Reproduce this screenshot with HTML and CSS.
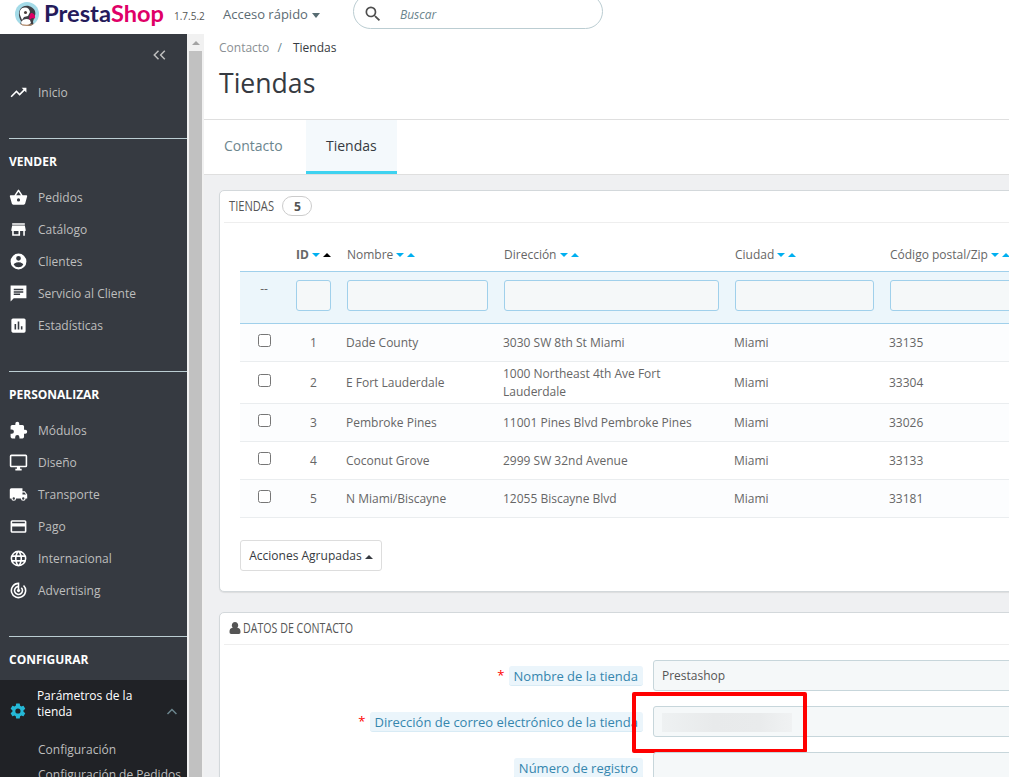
FILE: index.html
```html
<!DOCTYPE html>
<html lang="es">
<head>
    <meta charset="UTF-8">
    <meta name="viewport" content="width=device-width, initial-scale=1.0">
    <title>Tiendas • PrestaShop</title>
    <link rel="stylesheet" href="styles.css">
</head>
<body>
    <header class="header">
        <svg class="logo" width="150" height="34" viewBox="0 0 150 34">
            <clipPath id="badge"><circle cx="12" cy="14" r="12"/></clipPath>
            <g clip-path="url(#badge)">
                <rect width="24" height="28" fill="#a4dbe8"/>
                <path d="M5 26l1-5C4 18 3 13 5 9.500c2-4 8-5 12-2 3 2 4 5 3 8l-2 6 1 6z" fill="#3f3f45"/>
                <path d="M5 15c-1-4 1-7.500 5-7.500 3 0 4.500 2 5 4.500l-2 4-4 1-2 3z" fill="#fff"/>
                <path d="M6 22c2-3 6-4 9-2l1 3-4 3H7z" fill="#fff"/>
                <path d="M16 13c3 0 4.500 2.500 4 5.500L17 18l-2.500 2c-.5-3 0-5 1.500-7z" fill="#df0067"/>
                <circle cx="10.500" cy="12.500" r="1.500" fill="#4a3f3b"/>
                <path d="M4 23.500c4 1.500 11 1.500 16 0V28H4z" fill="#b58a68"/>
            </g>
            <text class="logo-presta" x="29" y="22" textLength="67" lengthAdjust="spacingAndGlyphs">Presta</text>
            <text class="logo-shop" x="96" y="22" textLength="53" lengthAdjust="spacingAndGlyphs">Shop</text>
        </svg>
        <span class="version">1.7.5.2</span>
        <span class="quick">Acceso rápido <i class="caret-down"></i></span>
        <div class="search">
            <svg width="20" height="20" viewBox="0 0 24 24"><path d="M15.500 14h-.79l-.28-.27A6.470 6.470 0 0 0 16 9.500 6.500 6.500 0 1 0 9.500 16c1.610 0 3.090-.59 4.230-1.570l.27.28v.79l5 4.990L20.490 19l-4.990-5zm-6 0C7.010 14 5 11.990 5 9.500S7.010 5 9.500 5 14 7.010 14 9.500 11.990 14 9.500 14z"/></svg>
            <span>Buscar</span>
        </div>
    </header>

    <div class="page">
        <nav class="sidebar">
            <div class="collapse">
                <svg width="14" height="10" viewBox="0 0 14 10"><path d="M6.500.8 2.300 5l4.200 4.200M12.800.8 8.600 5l4.200 4.200"/></svg>
            </div>
            <ul class="menu">
                <li><svg viewBox="0 0 24 24"><path d="M16 6l2.290 2.290-4.880 4.880-4-4L2 16.590 3.410 18l6-6 4 4 6.300-6.290L22 12V6z"/></svg>Inicio</li>
            </ul>

            <!-- Vender -->
            <h2 class="menu-title">VENDER</h2>
            <ul class="menu">
                <li><svg viewBox="0 0 24 24"><path d="M17.210 9l-4.380-6.560a1 1 0 0 0-1.660.010L6.790 9H2c-.55 0-1 .45-1 1 0 .09.010.18.040.27l2.540 9.270c.23.84 1 1.460 1.920 1.460h13c.92 0 1.690-.62 1.930-1.460l2.540-9.270L23 10c0-.55-.45-1-1-1zM9 9l3-4.400L15 9zm3 8a2 2 0 1 1 0-4 2 2 0 0 1 0 4z"/></svg>Pedidos</li>
                <li><svg viewBox="0 0 24 24"><path d="M20 4H4v2h16zm1 10v-2l-1-5H4l-1 5v2h1v6h10v-6h4v6h2v-6zm-9 4H6v-4h6z"/></svg>Catálogo</li>
                <li><svg viewBox="0 0 24 24"><path d="M12 2a10 10 0 1 0 0 20 10 10 0 0 0 0-20zm0 3a3 3 0 1 1 0 6 3 3 0 0 1 0-6zm0 14.200a7.200 7.200 0 0 1-6-3.220c.03-1.990 4-3.080 6-3.080s5.970 1.090 6 3.080a7.200 7.200 0 0 1-6 3.220z"/></svg>Clientes</li>
                <li><svg viewBox="0 0 24 24"><path d="M22 2H2v20l4-4h16zM6 9h12v2H6zm8 5H6v-2h8zm4-6H6V6h12z"/></svg>Servicio al Cliente</li>
                <li><svg viewBox="0 0 24 24"><path d="M19 3H5a2 2 0 0 0-2 2v14c0 1.100.9 2 2 2h14a2 2 0 0 0 2-2V5a2 2 0 0 0-2-2zM9 17H7v-7h2zm4 0h-2V7h2zm4 0h-2v-4h2z"/></svg>Estadísticas</li>
            </ul>

            <!-- Personalizar -->
            <h2 class="menu-title">PERSONALIZAR</h2>
            <ul class="menu">
                <li><svg viewBox="0 0 24 24"><path d="M20.500 11H19V7a2 2 0 0 0-2-2h-4V3.500a2.500 2.500 0 0 0-5 0V5H4a2 2 0 0 0-2 2v3.800h1.500a2.700 2.700 0 0 1 0 5.400H2V20c0 1.100.9 2 2 2h3.800v-1.500a2.700 2.700 0 0 1 5.400 0V22H17a2 2 0 0 0 2-2v-4h1.500a2.500 2.500 0 0 0 0-5z"/></svg>Módulos</li>
                <li><svg viewBox="0 0 24 24"><path d="M21 2H3a2 2 0 0 0-2 2v12c0 1.100.9 2 2 2h7v2H8v2h8v-2h-2v-2h7a2 2 0 0 0 2-2V4a2 2 0 0 0-2-2zm0 14H3V4h18z"/></svg>Diseño</li>
                <li><svg viewBox="0 0 24 24"><path d="M20 8h-3V4H3a2 2 0 0 0-2 2v11h2a3 3 0 0 0 6 0h6a3 3 0 0 0 6 0h2v-5zM6 18.500a1.500 1.500 0 1 1 0-3 1.500 1.500 0 0 1 0 3zm13.500-9l1.960 2.500H17V9.500zm-1.500 9a1.500 1.500 0 1 1 0-3 1.500 1.500 0 0 1 0 3z"/></svg>Transporte</li>
                <li><svg viewBox="0 0 24 24"><path d="M20 4H4a2 2 0 0 0-2 2v12c0 1.110.89 2 2 2h16a2 2 0 0 0 2-2V6a2 2 0 0 0-2-2zm0 14H4v-6h16zm0-10H4V6h16z"/></svg>Pago</li>
                <li><svg viewBox="0 0 24 24"><path d="M12 2a10 10 0 1 0 0 20 10 10 0 0 0 0-20zm6.930 6h-2.950a15.650 15.650 0 0 0-1.380-3.560A8.030 8.030 0 0 1 18.930 8zM12 4.040c.83 1.200 1.480 2.530 1.910 3.960h-3.820c.43-1.430 1.080-2.760 1.910-3.960zM4.260 14a8.200 8.200 0 0 1 0-4h3.380a16.500 16.500 0 0 0 0 4zm.82 2h2.950c.32 1.250.78 2.450 1.380 3.560A7.990 7.990 0 0 1 5.080 16zm2.950-8H5.080a7.990 7.990 0 0 1 4.330-3.560A15.650 15.650 0 0 0 8.030 8zM12 19.960A14 14 0 0 1 10.090 16h3.820A14 14 0 0 1 12 19.960zM14.340 14H9.660a14.700 14.700 0 0 1 0-4h4.680a14.600 14.600 0 0 1 0 4zm.25 5.560c.6-1.110 1.060-2.310 1.380-3.560h2.950a8.030 8.030 0 0 1-4.330 3.560zM16.360 14a16.500 16.500 0 0 0 0-4h3.380a8.200 8.200 0 0 1 0 4z"/></svg>Internacional</li>
                <li><svg viewBox="0 0 24 24"><path d="M19.070 4.930l-1.410 1.410A8 8 0 1 1 11 4.070v2.020a6 6 0 1 0 5.240 1.670l-1.410 1.410A4 4 0 1 1 11 8.140v2.140a2 2 0 1 0 2 0V2h-1a10 10 0 1 0 7.070 2.930z"/></svg>Advertising</li>
            </ul>

            <!-- Configurar -->
            <h2 class="menu-title last">CONFIGURAR</h2>
            <div class="open-item">
                <div class="open-head">
                    <svg class="gear" viewBox="0 0 24 24"><path d="M19.430 12.980a7.800 7.800 0 0 0 0-1.960l2.110-1.650a.5.5 0 0 0 .12-.64l-2-3.460a.5.5 0 0 0-.61-.22l-2.490 1a7.300 7.300 0 0 0-1.690-.98l-.38-2.650A.49.49 0 0 0 14 2h-4a.49.49 0 0 0-.49.42l-.38 2.650c-.61.25-1.170.59-1.690.98l-2.490-1a.49.49 0 0 0-.61.22l-2 3.460a.49.49 0 0 0 .12.64l2.110 1.650a7.900 7.900 0 0 0 0 1.960l-2.110 1.650a.5.5 0 0 0-.12.64l2 3.460c.12.22.39.3.61.22l2.490-1c.52.4 1.080.73 1.690.98l.38 2.650c.03.24.24.42.49.42h4c.25 0 .46-.18.49-.42l.38-2.650a7.700 7.700 0 0 0 1.690-.98l2.490 1c.23.090.49 0 .61-.22l2-3.460a.5.5 0 0 0-.12-.64zM12 15.500a3.500 3.500 0 1 1 0-7 3.500 3.500 0 0 1 0 7z"/></svg>
                    <span>Parámetros de la tienda</span>
                    <svg class="chevron" width="12" height="7" viewBox="0 0 12 7"><path d="M1.500 6 6 1.500 10.500 6"/></svg>
                </div>
                <ul class="submenu">
                    <li>Configuración</li>
                    <li>Configuración de Pedidos</li>
                </ul>
            </div>
        </nav>
        <div class="scrollbar"><i class="scroll-up"></i><div class="scroll-thumb"></div></div>

        <main class="main">
            <div class="page-head">
                <div class="breadcrumb">Contacto <em>/</em> <b>Tiendas</b></div>
                <h1>Tiendas</h1>
            </div>
            <div class="tabs">
                <a class="tab">Contacto</a>
                <a class="tab active">Tiendas</a>
            </div>

            <section class="panel stores">
                <div class="panel-heading">
                    <svg width="48" height="22"><text x="0" y="15.500" textLength="45" lengthAdjust="spacingAndGlyphs">TIENDAS</text></svg>
                    <span class="badge"><svg width="10" height="18"><text x="0" y="13.500" textLength="7" lengthAdjust="spacingAndGlyphs">5</text></svg></span>
                </div>
                <table class="table">
                    <colgroup>
                        <col class="c-check"><col class="c-id"><col class="c-name"><col class="c-address"><col class="c-city"><col class="c-zip">
                    </colgroup>
                    <thead>
                        <tr class="titles">
                            <th></th>
                            <th class="sorted">ID <i class="down"></i><i class="up"></i></th>
                            <th>Nombre <i class="down"></i><i class="up"></i></th>
                            <th>Dirección <i class="down"></i><i class="up"></i></th>
                            <th>Ciudad <i class="down"></i><i class="up"></i></th>
                            <th>Código postal/Zip <i class="down"></i><i class="up"></i></th>
                        </tr>
                        <tr class="filters">
                            <th class="dashes">--</th>
                            <th><input type="text"></th>
                            <th><input type="text"></th>
                            <th><input type="text"></th>
                            <th><input type="text"></th>
                            <th><input type="text"></th>
                        </tr>
                    </thead>
                    <tbody>
                        <tr><td><input type="checkbox"></td><td>1</td><td>Dade County</td><td>3030 SW 8th St Miami</td><td>Miami</td><td>33135</td></tr>
                        <tr class="tall"><td><input type="checkbox"></td><td>2</td><td>E Fort Lauderdale</td><td>1000 Northeast 4th Ave Fort<br>Lauderdale</td><td>Miami</td><td>33304</td></tr>
                        <tr><td><input type="checkbox"></td><td>3</td><td>Pembroke Pines</td><td>11001 Pines Blvd Pembroke Pines</td><td>Miami</td><td>33026</td></tr>
                        <tr><td><input type="checkbox"></td><td>4</td><td>Coconut Grove</td><td>2999 SW 32nd Avenue</td><td>Miami</td><td>33133</td></tr>
                        <tr><td><input type="checkbox"></td><td>5</td><td>N Miami/Biscayne</td><td>12055 Biscayne Blvd</td><td>Miami</td><td>33181</td></tr>
                    </tbody>
                </table>
                <button class="bulk" type="button">Acciones Agrupadas <i class="up"></i></button>
            </section>

            <section class="panel contact">
                <div class="panel-heading">
                    <svg class="user" width="12" height="12" viewBox="0 0 12 12"><path d="M6 0a3.200 3.400 0 0 1 2.300 5.800C10.800 6.200 11.500 7.600 11.500 10c0 1.200-.6 2-1.700 2H2.200C1.100 12 .5 11.200.5 10c0-2.400.7-3.800 3.200-4.200A3.200 3.400 0 0 1 6 0z"/></svg>
                    <svg width="116" height="22"><text x="0" y="15.500" textLength="110" lengthAdjust="spacingAndGlyphs">DATOS DE CONTACTO</text></svg>
                </div>
                <div class="form-row">
                    <label><em>*</em><span>Nombre de la tienda</span></label>
                    <input type="text" value="Prestashop">
                </div>
                <div class="form-row">
                    <label><em>*</em><span>Dirección de correo electrónico de la tienda</span></label>
                    <div class="field"><div class="hidden-mail"></div></div>
                    <div class="highlight"></div>
                </div>
                <div class="form-row">
                    <label><span>Número de registro</span></label>
                    <input type="text">
                </div>
            </section>
        </main>
    </div>
</body>
</html>
```
FILE: styles.css
```css
* {
    box-sizing: border-box;
}
body {
    margin: 0;
    height: 777px;
    overflow: hidden;
    background-color: #eff0f2;
    font-family: "Open Sans", sans-serif;
    font-size: 12px;
    color: #555;
}
ul {
    list-style: none;
    margin: 0;
    padding: 0;
}
i {
    display: inline-block;
}

/* Top bar */
.header {
    display: flex;
    height: 34px;
    background: #fff;
}
.logo {
    margin-left: 15px;
}
.logo-presta, .logo-shop {
    font-family: "Lato", sans-serif;
    font-weight: 700;
    font-size: 22px;
    fill: #251b5b;
}
.logo-shop {
    fill: #df0067;
}
.version {
    width: 49px;
    padding: 9px 0 0 9px;
    font-size: 10px;
    line-height: 15px;
}
.quick {
    width: 139px;
    padding: 5px 0 0 9px;
    font-size: 13px;
    line-height: 18px;
    color: #5c6b73;
}
.caret-down {
    border: 4.500px solid transparent;
    border-top: 5px solid #576c72;
    border-bottom: 0;
    margin-left: 1px;
    vertical-align: 1px;
}
.search {
    display: flex;
    align-items: center;
    width: 250px;
    height: 35px;
    margin-top: -6px;
    padding: 5px 0 0 9px;
    border: 1px solid #bbcdd2;
    border-radius: 18px;
    gap: 17px;
    font-style: italic;
    color: #6c868e;
}
.search svg {
    fill: #4e4e4e;
}

/* Sidebar */
.page {
    display: flex;
    height: 743px;
}
.sidebar {
    flex: none;
    width: 187px;
    height: 743px;
    overflow: hidden;
    background: #363a41;
}
.collapse {
    height: 42px;
    padding: 13px 0 0 152px;
}
.collapse path, .chevron path {
    fill: none;
    stroke: #bebebe;
    stroke-width: 1.500;
}
.menu li {
    display: flex;
    align-items: center;
    height: 32px;
    padding-left: 9px;
    gap: 10px;
    color: #bebebe;
}
.menu svg {
    width: 19px;
    height: 19px;
    fill: #fff;
}
.menu-title {
    height: 43px;
    margin: 30px 0 0 9px;
    border-top: 1px solid #bbcdd2;
    font-size: 12px;
    font-weight: 700;
    line-height: 45px;
    color: #fff;
}
.menu-title.last {
    height: 44px;
}
.open-item {
    height: 120px;
    background: #202226;
}
.open-head {
    display: flex;
    align-items: flex-end;
    height: 40px;
    padding: 0 9px;
    line-height: 16px;
    color: #fff;
}
.open-head span {
    width: 120px;
    margin-left: 10px;
}
.gear {
    width: 18px;
    height: 18px;
    fill: #25b9d7;
}
.chevron {
    margin: 0 0 5px 10px;
}
.chevron path {
    stroke: #6c868e;
}
.submenu {
    padding: 17px 0 0 38px;
    line-height: 25px;
    white-space: nowrap;
    color: #bebebe;
}
.scrollbar {
    flex: none;
    width: 17px;
    padding: 7px 2px 0;
    background: #f1f1f1;
}
.scroll-up {
    display: block;
    width: 8px;
    margin: 0 0 6px 3px;
    border: 4px solid transparent;
    border-top: 0;
    border-bottom: 4px solid #a3a3a3;
}
.scroll-thumb {
    width: 13px;
    height: 726px;
    background: #c1c1c1;
}

/* Page heading and tabs */
.main {
    flex: 1;
    min-width: 0;
    overflow: hidden;
}
.page-head {
    height: 86px;
    padding: 5px 0 0 15px;
    border-bottom: 1px solid #dfdfdf;
    background: #fff;
}
.breadcrumb {
    line-height: 18px;
    color: #8a8f93;
}
.breadcrumb em {
    margin: 0 5px;
    font-style: normal;
    color: #6c868e;
}
.breadcrumb b {
    margin-left: 3px;
    font-weight: 400;
    color: #363a41;
}
h1 {
    margin: 9px 0 0;
    font-size: 26.600px;
    font-weight: 400;
    line-height: 35px;
    color: #363a41;
}
.tabs {
    display: flex;
    height: 55px;
    background: #fff;
    border-bottom: 1px solid #dfdfdf;
}
.tab {
    width: 102px;
    padding-left: 20px;
    font-size: 14px;
    line-height: 52px;
    color: #6c868e;
}
.tab.active {
    width: 91px;
    background: #f4f9fc;
    border-bottom: 3px solid #3ed2f0;
    color: #363a41;
}

/* Panels */
.panel {
    width: 1100px;
    margin: 15px 0 0 15px;
    padding: 0 4px;
    border: 1px solid #d3d8db;
    border-radius: 5px;
    background: #fff;
    box-shadow: 0 1px 1px rgba(0, 0, 0, .08);
}
.stores {
    height: 402px;
}
.contact {
    height: 300px;
    margin-top: 20px;
}
.panel-heading {
    display: flex;
    align-items: center;
    height: 32px;
    padding: 0 0 1px 5px;
    border-bottom: 1px solid #eee;
}
.panel-heading svg {
    overflow: visible;
}
.panel-heading text {
    font-size: 14px;
    fill: #555;
}
.badge {
    width: 30px;
    height: 20px;
    margin-left: 5px;
    padding-left: 11px;
    border: 1px solid #ccc;
    border-radius: 10px;
}
.badge text {
    font-weight: 700;
    font-size: 13px;
}
.user {
    margin-right: 2px;
    fill: #555;
}
.table {
    width: 1000px;
    margin: 15px 0 0 16px;
    table-layout: fixed;
    border-collapse: separate;
    border-spacing: 0;
}
.c-check { width: 48px; }
.c-id { width: 51px; }
.c-name { width: 157px; }
.c-address { width: 231px; }
.c-city { width: 155px; }
.table th {
    padding: 0 8px;
    font-weight: 400;
    text-align: left;
    white-space: nowrap;
    color: #666;
}
.titles th {
    height: 34px;
    border-bottom: 1px solid #a0d0eb;
}
.table .sorted {
    font-weight: 700;
}
.down, .up {
    border: 4px solid transparent;
    border-top: 4px solid #00aff0;
    border-bottom: 0;
    vertical-align: 2px;
}
.up {
    margin-left: 3px;
    border-top: 0;
    border-bottom: 4px solid #00aff0;
}
.sorted .up {
    border-bottom-color: #000;
}
.filters th {
    height: 52px;
    padding-bottom: 4px;
    background: #ecf6fb;
    border-bottom: 1px solid #a0d0eb;
}
.filters .dashes {
    padding-bottom: 18px;
    text-align: center;
}
.filters input {
    display: block;
    width: 100%;
    height: 31px;
    border: 1px solid #a0d0eb;
    border-radius: 3px;
    background: #f5f8f9;
}
.table td {
    height: 38px;
    padding: 0 7px;
    border-bottom: 1px solid #eaedef;
    line-height: 18px;
    color: #666;
}
.table .tall td {
    height: 42px;
}
.table tr:nth-child(odd) td {
    background: #fcfdfe;
}
.table td:nth-child(1), .table td:nth-child(2) {
    text-align: center;
}
.table td input {
    display: block;
    margin: -4px auto 0;
}
.bulk {
    width: 142px;
    height: 31px;
    margin: 22px 0 0 16px;
    padding: 0;
    border: 1px solid #ddd;
    border-radius: 3px;
    background: #fff;
    font-family: inherit;
    font-size: 12px;
    color: #363a41;
}
.bulk .up {
    margin-left: 0;
    border-bottom-color: #363a41;
    vertical-align: 1px;
}

/* Contact form */
.form-row {
    display: flex;
    position: relative;
    height: 46px;
}
.contact .panel-heading {
    margin-bottom: 15px;
}
.form-row label {
    display: flex;
    justify-content: flex-end;
    width: 419px;
    margin-right: 10px;
    padding-top: 6px;
    font-size: 13px;
}
.form-row label span {
    height: 20px;
    padding: 0 5px;
    border-bottom: 1px solid #d8ebf5;
    border-radius: 3px;
    background: #ebf5fb;
    line-height: 20px;
    color: #3586ae;
}
.form-row em {
    margin-right: 4px;
    font-style: normal;
    color: #f00;
}
.form-row input, .field {
    width: 600px;
    height: 31px;
    padding: 0 8px;
    border: 1px solid #c7d6db;
    border-radius: 3px;
    background: #f5f8f9;
    font-family: inherit;
    font-size: 12px;
    color: #555;
}
.hidden-mail {
    width: 130px;
    height: 19px;
    margin-top: 6px;
    background: linear-gradient(90deg, #eef1f2, #e8eaeb 40%, #e9ebec 75%, #f0f2f3);
}
/* Frame drawn over the e-mail field */
.highlight {
    position: absolute;
    left: 408px;
    top: -14px;
    width: 175px;
    height: 61px;
    border: 4px solid #f00;
    border-radius: 2px;
}
```
